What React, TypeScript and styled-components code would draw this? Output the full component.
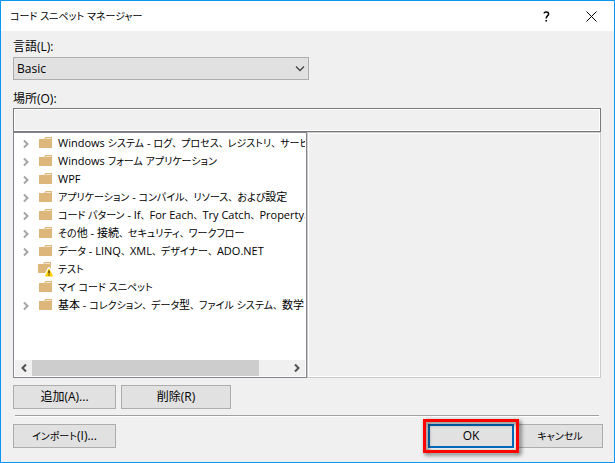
import React from "react";
import styled, { createGlobalStyle, css } from "styled-components";

const fontStack = '"Open Sans", "Noto Sans CJK JP", sans-serif';

const GlobalStyle = createGlobalStyle`
  *, *::before, *::after { box-sizing: border-box; }
  body { margin: 0; background: #f0f0f0; }
  body, button, input, select {
    font-family: ${fontStack};
    font-size: 12px;
    line-height: 18px;
    color: #000;
  }
`;

const Dialog = styled.main`
  display: flex;
  flex-direction: column;
  min-height: 100vh;
  border: 1px solid #0c96f4;
  background: #f0f0f0;
`;

const TitleBar = styled.header`
  display: flex;
  align-items: center;
  height: 30px;
  padding-left: 9px;
  background: #fff;
`;

const Title = styled.h1`
  flex: 1;
  margin: 0;
  font-size: 11px;
  font-weight: 400;
`;

const Kana = styled.span`
  font-size: 10px;
  font-feature-settings: "palt";
`;

const Comma = styled.span`
  font-size: 9px;
`;

const CaptionButton = styled.button`
  display: flex;
  align-items: center;
  justify-content: center;
  width: 45px;
  height: 30px;
  padding: 0;
  border: 0;
  background: transparent;
`;

const Content = styled.form`
  display: flex;
  flex: 1;
  flex-direction: column;
  padding: 7px 13px 14px 12px;
`;

const FieldLabel = styled.label`
  display: block;
  height: 18px;
`;

const SelectBox = styled.div`
  position: relative;
  width: 296px;
  max-width: 100%;
  margin: 1px 0 10px;
`;

const Select = styled.select`
  display: block;
  appearance: none;
  width: 100%;
  height: 23px;
  padding: 0 24px 0 3px;
  border: 1px solid #adadad;
  border-radius: 0;
  background: #e1e1e1;
`;

const SelectArrow = styled.svg`
  position: absolute;
  top: 8px;
  right: 4px;
  pointer-events: none;
`;

const LocationInput = styled.input`
  display: block;
  width: 100%;
  height: 24px;
  padding: 0 4px;
  border: 1px solid #7a7a7a;
  border-radius: 0;
  background: #f0f0f0;
  box-shadow: inset 0 0 0 1px #fff;
  outline: none;
`;

const Panels = styled.div`
  display: grid;
  grid-template-columns: 294px minmax(0, 1fr);
  min-height: 246px;
`;

const TreePanel = styled.section`
  display: flex;
  flex-direction: column;
  min-width: 0;
  padding: 1px;
  border: 1px solid #828790;
  background: #fff;
`;

const Tree = styled.ul`
  flex: 1;
  margin: 0;
  padding: 0;
  overflow: hidden;
  list-style: none;
`;

const TreeRow = styled.li`
  display: flex;
  align-items: center;
  height: 18px;
  font-size: 11px;
  white-space: nowrap;
`;

const ExpandSlot = styled.span`
  display: flex;
  flex: none;
  width: 22px;
`;

const ExpandButton = styled.button`
  display: flex;
  align-items: center;
  justify-content: center;
  width: 22px;
  height: 18px;
  padding: 2px 0 0;
  border: 0;
  background: transparent;
`;

const FolderSvg = styled.svg`
  flex: none;
  margin-right: 3px;
`;

const ScrollBar = styled.div`
  display: flex;
  height: 16px;
  background: #f0f0f0;
`;

const ScrollTrack = styled.div`
  flex: 1;
  padding-right: 29px;
`;

const ScrollThumb = styled.div`
  height: 100%;
  background: #cdcdcd;
`;

const ScrollButton = styled.button`
  display: flex;
  align-items: center;
  justify-content: center;
  width: 17px;
  padding: 0;
  border: 0;
  background: #f0f0f0;
`;

const DetailPanel = styled.section`
  border: 1px solid #cbcbcb;
  background: #f0f0f0;
  box-shadow: inset 0 0 0 1px #fff;
`;

const ButtonRow = styled.div<{ $split?: boolean }>`
  display: flex;
  gap: 5px;
  justify-content: ${(p) => (p.$split ? "space-between" : "flex-start")};
  margin-top: 7px;
  margin-right: ${(p) => (p.$split ? "-2px" : "0")};
`;

const ButtonGroup = styled.div`
  display: flex;
  gap: 3px;
`;

const PushButton = styled.button<{ $width: number; $primary?: boolean }>`
  width: ${(p) => p.$width}px;
  height: 24px;
  padding: 0;
  border: 1px solid #adadad;
  background: #e1e1e1;
  ${(p) =>
    p.$primary &&
    css`
      border: 2px solid #0069b8;
    `}
`;

const Separator = styled.hr`
  width: calc(100% - 4px);
  height: 2px;
  margin: 6px 0 0 2px;
  border: 0;
  border-top: 1px solid #a0a0a0;
  border-bottom: 1px solid #fff;
`;

const HighlightAnchor = styled.div`
  position: relative;
  z-index: 1;
`;

const Highlight = styled.span`
  position: absolute;
  inset: -5px;
  border: 3px solid #f00;
  filter: drop-shadow(2px 2px 2px rgba(0, 0, 0, 0.6));
  pointer-events: none;
`;

type Snippet = { name: string; expandable?: boolean; warning?: boolean };

const snippets: Snippet[] = [
  { name: "Windows システム - ログ、プロセス、レジストリ、サービ", expandable: true },
  { name: "Windows フォーム アプリケーション", expandable: true },
  { name: "WPF", expandable: true },
  { name: "アプリケーション - コンパイル、リソース、および設定", expandable: true },
  { name: "コード パターン - If、For Each、Try Catch、Property、", expandable: true },
  { name: "その他 - 接続、セキュリティ、ワークフロー", expandable: true },
  { name: "データ - LINQ、XML、デザイナー、ADO.NET", expandable: true },
  { name: "テスト", warning: true },
  { name: "マイ コード スニペット" },
  { name: "基本 - コレクション、データ型、ファイル システム、数学", expandable: true },
];

function UiText({ children }: { children: string }) {
  return (
    <span>
      {children.split(/([\u3041-\u30ff]+|、)/).map((run, i) => {
        if (i % 2 === 0) return run;
        return run === "、" ? <Comma key={i}>{run}</Comma> : <Kana key={i}>{run}</Kana>;
      })}
    </span>
  );
}

function FolderIcon({ warning }: { warning?: boolean }) {
  return (
    <FolderSvg width="18" height="18" viewBox="0 0 18 18" aria-hidden="true">
      <g transform={warning ? "translate(-1 -1)" : undefined}>
        <path d="M2 5h5l1.5-2H15v11H2z" fill="#dcb67a" />
        <path d="M8.5 4.5H14" stroke="#f5e8d2" strokeWidth="1" />
      </g>
      {warning && (
        <>
          <path d="M11.5 8h1L16.5 16h-9z" fill="#fff" stroke="#fff" strokeWidth="1.5" />
          <path d="M12 9L15.5 16h-7z" fill="#ffcc00" stroke="#ffcc00" strokeLinejoin="round" />
          <path d="M11.5 10.5h1v3h-1zM11.5 14.5h1v1h-1z" fill="#000" />
        </>
      )}
    </FolderSvg>
  );
}

function Chevron({ left, color }: { left?: boolean; color: string }) {
  return (
    <svg width="8" height="10" viewBox="0 0 8 10" aria-hidden="true">
      <path
        d={left ? "M6 1.5L2.5 5L6 8.5" : "M2 1.5L5.5 5L2 8.5"}
        fill="none"
        stroke={color}
        strokeWidth="2"
      />
    </svg>
  );
}

export default function App() {
  return (
    <>
      <GlobalStyle />
      <Dialog>
        <TitleBar>
          <Title>
            <UiText>コード スニペット マネージャー</UiText>
          </Title>
          <CaptionButton type="button" aria-label="ヘルプ">
            <svg width="7" height="11" viewBox="0 0 7 11" aria-hidden="true">
              <path
                d="M1 2.4C1.4.4 5.6.3 5.6 2.9C5.6 4.8 3.2 4.9 3.2 7.6"
                fill="none"
                stroke="#000"
                strokeWidth="1.5"
              />
              <path d="M2.4 9h1.6v1.6H2.4z" />
            </svg>
          </CaptionButton>
          <CaptionButton type="button" aria-label="閉じる">
            <svg width="11" height="11" viewBox="0 0 11 11" aria-hidden="true">
              <path d="M.5.5l10 10M10.5.5l-10 10" stroke="#000" strokeWidth="1" />
            </svg>
          </CaptionButton>
        </TitleBar>
        <Content onSubmit={(e) => e.preventDefault()}>
          <FieldLabel htmlFor="language">言語(L):</FieldLabel>
          <SelectBox>
            <Select id="language" defaultValue="Basic">
              <option>Basic</option>
            </Select>
            <SelectArrow width="10" height="7" viewBox="0 0 10 7" aria-hidden="true">
              <path d="M1 1.5l4 4l4-4" fill="none" stroke="#444" strokeWidth="1.3" />
            </SelectArrow>
          </SelectBox>
          <FieldLabel htmlFor="location">場所(O):</FieldLabel>
          <LocationInput id="location" readOnly />
          <Panels>
            <TreePanel>
              <Tree aria-label="スニペット">
                {snippets.map((item) => (
                  <TreeRow key={item.name}>
                    <ExpandSlot>
                      {item.expandable && (
                        <ExpandButton type="button" aria-label={`${item.name} を展開`}>
                          <Chevron color="#a6a6a6" />
                        </ExpandButton>
                      )}
                    </ExpandSlot>
                    <FolderIcon warning={item.warning} />
                    <UiText>{item.name}</UiText>
                  </TreeRow>
                ))}
              </Tree>
              <ScrollBar>
                <ScrollButton type="button" aria-label="左へスクロール">
                  <Chevron left color="#505050" />
                </ScrollButton>
                <ScrollTrack>
                  <ScrollThumb />
                </ScrollTrack>
                <ScrollButton type="button" aria-label="右へスクロール">
                  <Chevron color="#505050" />
                </ScrollButton>
              </ScrollBar>
            </TreePanel>
            <DetailPanel aria-label="詳細" />
          </Panels>
          <ButtonRow>
            <PushButton type="button" $width={103}>追加(A)...</PushButton>
            <PushButton type="button" $width={110}>削除(R)</PushButton>
          </ButtonRow>
          <Separator />
          <ButtonRow $split>
            <PushButton type="button" $width={103}>
              <UiText>インポート(I)...</UiText>
            </PushButton>
            <ButtonGroup>
              <HighlightAnchor>
                <PushButton type="submit" $width={86} $primary>OK</PushButton>
                <Highlight />
              </HighlightAnchor>
              <PushButton type="button" $width={86}>
                <UiText>キャンセル</UiText>
              </PushButton>
            </ButtonGroup>
          </ButtonRow>
        </Content>
      </Dialog>
    </>
  );
}
